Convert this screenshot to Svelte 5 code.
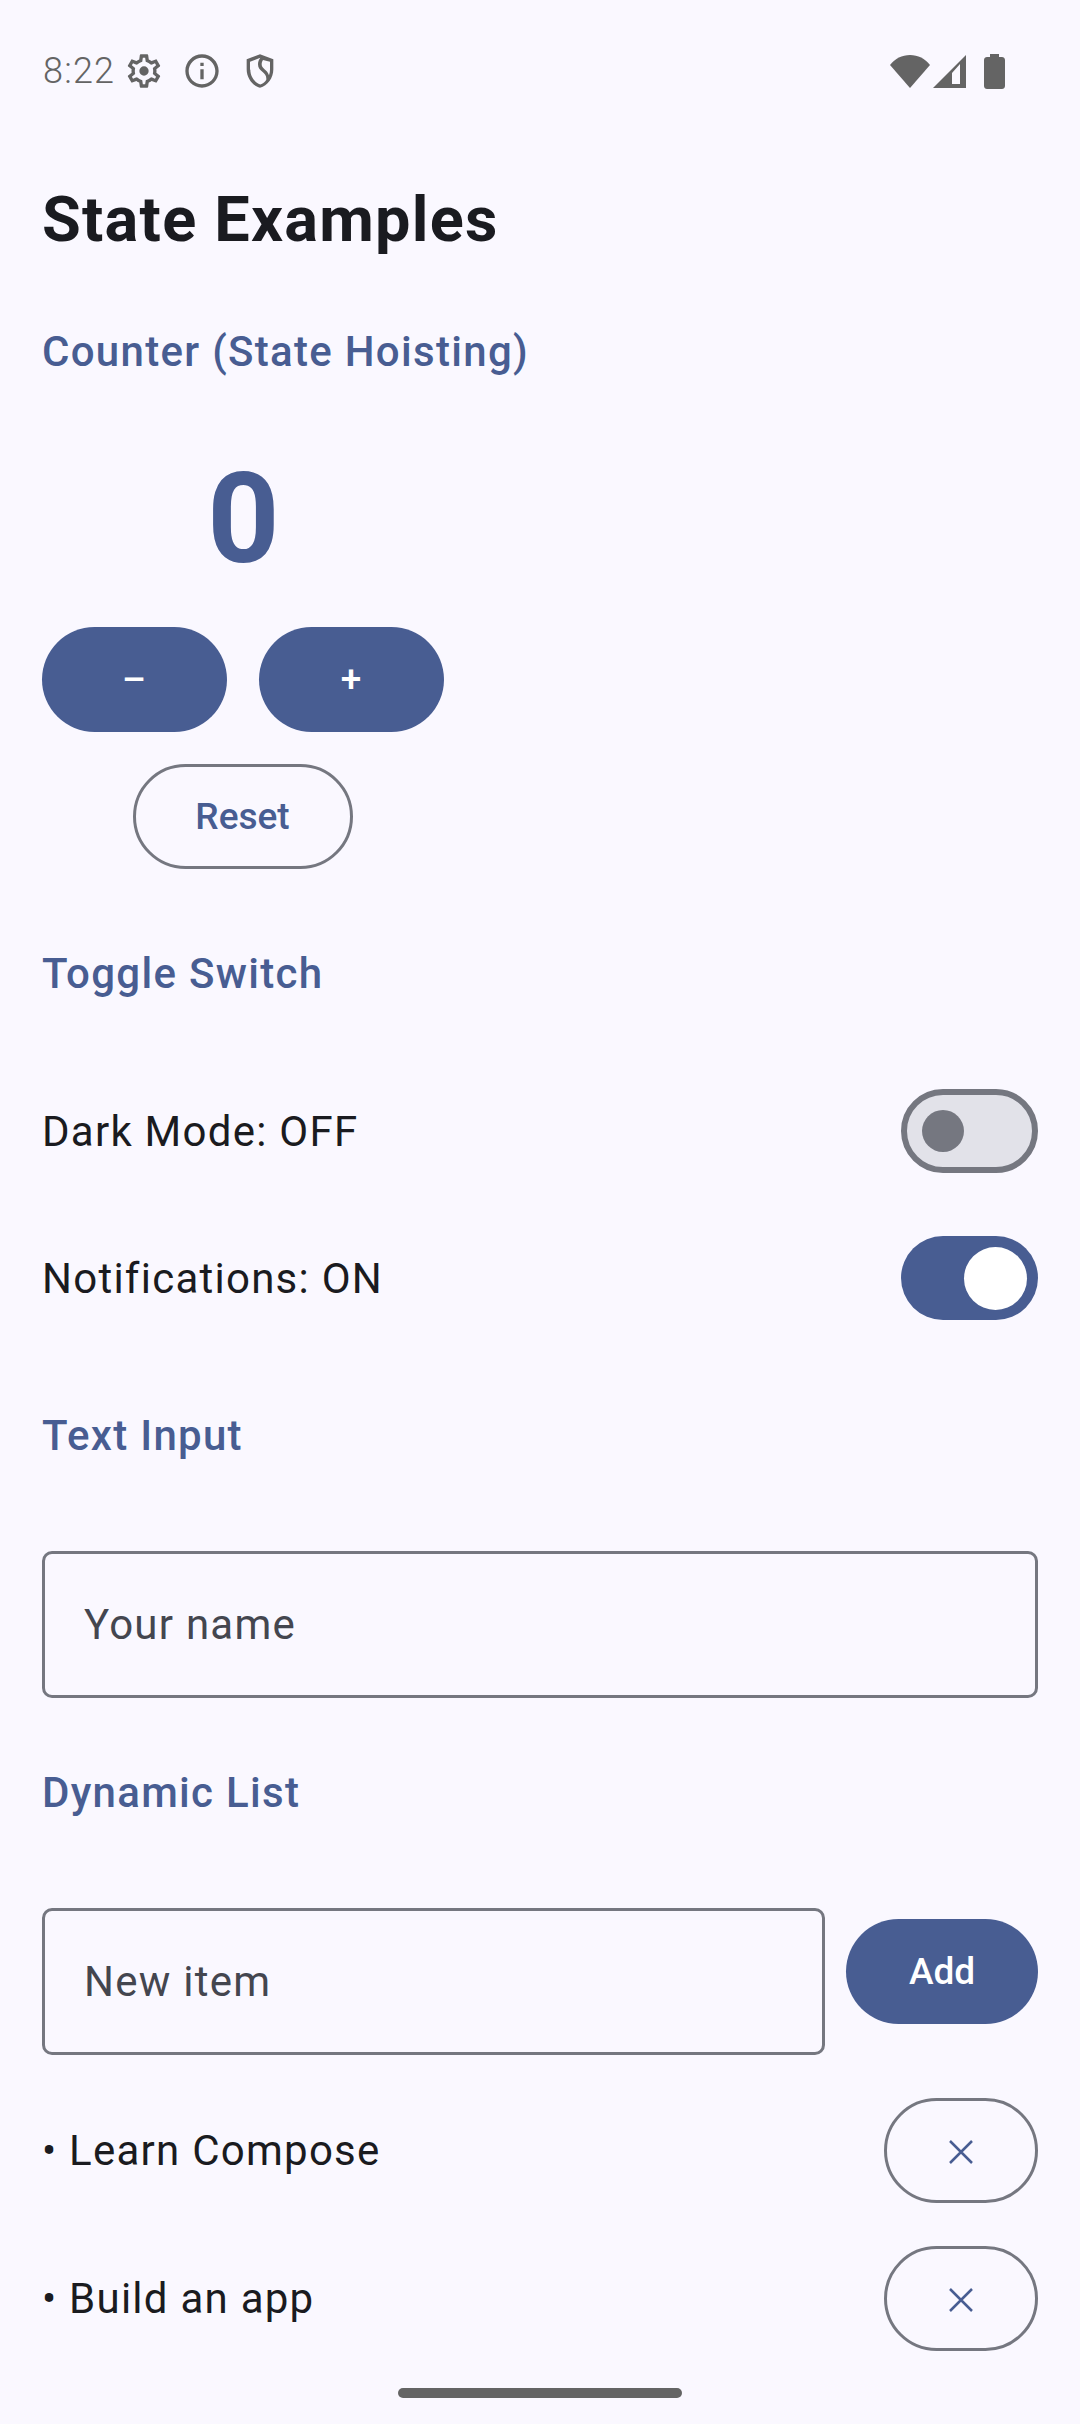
<script>
  let items = ["Learn Compose", "Build an app"];
</script>

<div class="page">
  <div class="status">
    <span class="time">8:22</span>
    <svg class="ic gear" viewBox="0 0 24 24"><path d="M19.43 12.98c.04-.32.07-.64.07-.98s-.03-.66-.07-.98l2.11-1.65c.19-.15.24-.42.12-.64l-2-3.46c-.12-.22-.39-.3-.61-.22l-2.49 1c-.52-.4-1.08-.73-1.69-.98l-.38-2.65C14.46 2.18 14.25 2 14 2h-4c-.25 0-.46.18-.49.42l-.38 2.65c-.61.25-1.17.59-1.69.98l-2.49-1c-.23-.09-.49 0-.61.22l-2 3.46c-.13.22-.07.49.12.64l2.11 1.65c-.04.32-.07.65-.07.98s.03.66.07.98l-2.11 1.65c-.19.15-.24.42-.12.64l2 3.46c.12.22.39.3.61.22l2.49-1c.52.4 1.08.73 1.69.98l.38 2.65c.03.24.24.42.49.42h4c.25 0 .46-.18.49-.42l.38-2.65c.61-.25 1.17-.59 1.69-.98l2.49 1c.23.09.49 0 .61-.22l2-3.46c.12-.22.07-.49-.12-.64l-2.11-1.65zm-1.98-1.71c.04.31.05.52.05.73s-.02.43-.05.73l-.14 1.13.89.7 1.08.84-.7 1.21-1.27-.51-1.04-.42-.9.68c-.43.32-.84.56-1.25.73l-1.06.43-.16 1.13-.2 1.35h-1.4l-.19-1.35-.16-1.13-1.06-.43c-.43-.18-.83-.41-1.23-.71l-.91-.7-1.06.43-1.27.51-.7-1.21 1.08-.84.89-.7-.14-1.13c-.03-.31-.05-.54-.05-.74s.02-.43.05-.73l.14-1.13-.89-.7-1.08-.84.7-1.21 1.27.51 1.04.42.9-.68c.43-.32.84-.56 1.25-.73l1.06-.43.16-1.13.2-1.35h1.39l.19 1.35.16 1.13 1.06.43c.43.18.83.41 1.23.71l.91.7 1.06-.43 1.27-.51.7 1.21-1.07.85-.89.7.14 1.13zM12 9.2a2.8 2.8 0 1 0 0 5.6 2.8 2.8 0 0 0 0-5.6z"/></svg>
    <svg class="ic info" viewBox="0 0 24 24"><path d="M11 7h2v2h-2zm0 4h2v6h-2zm1-9C6.48 2 2 6.48 2 12s4.48 10 10 10 10-4.48 10-10S17.52 2 12 2zm0 18c-4.41 0-8-3.59-8-8s3.59-8 8-8 8 3.59 8 8-3.59 8-8 8z"/></svg>
    <svg class="ic shield" viewBox="0 0 24 24"><path d="M12 2 4 5v6.100c0 5 3.400 9.700 8 10.900 4.600-1.200 8-5.900 8-10.900V5l-8-3zm6 9.100c0 1.200-.2 2.300-.6 3.400-.5-1.600-1.500-2.700-2.700-3.600-1-.8-1.700-1.600-1.700-2.900 0-1 .3-1.900.8-2.600L18 6.400v4.700zM6 11.100V6.400l6.200-2.300c-.9 1.100-1.400 2.400-1.400 3.900 0 2.100 1.200 3.400 2.600 4.500 1.400 1.100 2.400 2.200 2.400 4.100 0 .3 0 .5-.1.800-.8 1.200-2 2.200-3.500 2.700-3.600-1.200-6-4.900-6-8.800z"/></svg>
    <span class="spacer"></span>
    <svg class="wifi" viewBox="0 0 40 34"><path d="M0 11C5 4.500 12 1 20 1s15 3.500 20 10L20 34z"/></svg>
    <svg class="cell" viewBox="0 0 33 33"><path fill-rule="evenodd" d="M33 0v33H0zM27 9 19 18v11h8z"/></svg>
    <svg class="batt" viewBox="0 0 21 35"><path d="M6 0h9v3h3c1.500 0 3 1 3 3v26c0 2-1.500 3-3 3H3c-1.500 0-3-1-3-3V6c0-2 1.500-3 3-3h3z"/></svg>
  </div>

  <main>
    <h1>State Examples</h1>

    <h2 class="first">Counter (State Hoisting)</h2>
    <div class="counter">
      <div class="count">0</div>
      <div class="btns">
        <button class="filled">–</button>
        <button class="filled">+</button>
      </div>
      <button class="outlined reset">Reset</button>
    </div>

    <h2 class="toggle-head">Toggle Switch</h2>
    <div class="switches">
      <div class="row">
        <span class="body">Dark Mode: OFF</span>
        <span class="switch off"><i></i></span>
      </div>
      <div class="row">
        <span class="body">Notifications: ON</span>
        <span class="switch on"><i></i></span>
      </div>
    </div>

    <h2 class="input-head">Text Input</h2>
    <input class="field name" placeholder="Your name" />

    <h2 class="list-head">Dynamic List</h2>
    <div class="add-row">
      <input class="field" placeholder="New item" />
      <button class="filled add">Add</button>
    </div>
    <div class="items">
      {#each items as item}
        <div class="row">
          <span class="body">• {item}</span>
          <button class="outlined del" aria-label="Delete">
            <svg viewBox="0 0 24 24"><path d="M1 1 23 23M23 1 1 23" /></svg>
          </button>
        </div>
      {/each}
    </div>
  </main>

  <div class="pill"></div>
</div>

<style>
  :global(body) {
    margin: 0;
    background: #faf8ff;
  }
  .page {
    width: 1080px;
    height: 2424px;
    overflow: hidden;
    background: #faf8ff;
    font-family: Roboto, sans-serif;
    color: #1a1b20;
    display: flex;
    flex-direction: column;
    position: relative;
  }
  .status {
    height: 142px;
    padding: 0 75px 0 43px;
    box-sizing: border-box;
    display: flex;
    align-items: center;
    color: #646464;
    fill: #646464;
  }
  .time {
    font-size: 36px;
    font-weight: 300;
    letter-spacing: 1.2px;
  }
  .ic {
    width: 40px;
    height: 40px;
    fill: #646464;
  }
  .gear {
    margin-left: 9px;
  }
  .info {
    margin-left: 18px;
  }
  .shield {
    margin-left: 18px;
  }
  .spacer {
    flex: 1;
  }
  .wifi {
    width: 40px;
    height: 34px;
  }
  .cell {
    width: 33px;
    height: 33px;
    margin-left: 3px;
  }
  .batt {
    width: 21px;
    height: 35px;
    margin-left: 18px;
  }
  main {
    padding: 0 42px;
    display: flex;
    flex-direction: column;
  }
  h1 {
    margin: 36px 0 0;
    font-size: 63px;
    line-height: 84px;
    font-weight: 700;
    letter-spacing: 1.25px;
  }
  h2 {
    margin: 0;
    font-size: 42px;
    line-height: 63px;
    font-weight: 500;
    letter-spacing: 1.3px;
    color: #485d92;
  }
  .first {
    margin-top: 58px;
  }
  .toggle-head {
    margin-top: 73px;
  }
  .input-head {
    margin-top: 84px;
  }
  .list-head {
    margin-top: 63px;
  }
  .counter {
    width: 401px;
    display: flex;
    flex-direction: column;
    align-items: center;
  }
  .count {
    margin-top: 61px;
    padding-left: 2px;
    font-size: 126px;
    line-height: 150px;
    font-weight: 700;
    color: #485d92;
  }
  .btns {
    margin-top: 33px;
    display: flex;
    gap: 32px;
  }
  button {
    font-family: inherit;
    font-size: 37px;
    font-weight: 500;
    letter-spacing: 0;
    height: 105px;
    padding: 0 63px;
    border-radius: 53px;
    box-sizing: border-box;
  }
  .filled {
    background: #485d92;
    color: #fff;
    border: none;
  }
  .btns .filled {
    width: 185px;
    padding: 0;
  }
  .outlined {
    background: transparent;
    color: #485d92;
    border: 3px solid #757780;
  }
  .reset {
    margin-top: 32px;
    width: 220px;
    padding: 0;
  }
  .switches {
    margin-top: 84px;
    display: flex;
    flex-direction: column;
    gap: 63px;
  }
  .row {
    display: flex;
    align-items: center;
    justify-content: space-between;
  }
  .body {
    font-size: 42px;
    letter-spacing: 1.25px;
  }
  .switch {
    width: 137px;
    height: 84px;
    box-sizing: border-box;
    border-radius: 42px;
    display: flex;
    align-items: center;
  }
  .switch i {
    display: block;
    border-radius: 50%;
  }
  .off {
    background: #e2e2e9;
    border: 6px solid #757780;
    padding-left: 15px;
  }
  .off i {
    width: 42px;
    height: 42px;
    background: #757780;
  }
  .on {
    background: #485d92;
    justify-content: flex-end;
    padding-right: 11px;
  }
  .on i {
    width: 63px;
    height: 63px;
    background: #fff;
  }
  .field {
    display: block;
    box-sizing: border-box;
    width: 100%;
    min-width: 0;
    height: 147px;
    margin: 0;
    padding: 0 39px;
    background: transparent;
    border: 3px solid #757780;
    border-radius: 10px;
    font-family: inherit;
    font-size: 42px;
    letter-spacing: 1.25px;
    color: #1a1b20;
    outline: none;
  }
  .field::placeholder {
    color: #44464f;
    opacity: 1;
  }
  .name {
    margin-top: 84px;
  }
  .add-row {
    margin-top: 84px;
    display: flex;
    align-items: center;
    gap: 21px;
  }
  .add-row .field {
    flex: 1;
  }
  .add {
    flex: none;
    width: 192px;
    padding: 0;
    margin-top: -20px;
  }
  .items {
    margin-top: 43px;
    display: flex;
    flex-direction: column;
    gap: 43px;
  }
  .del {
    width: 154px;
    padding: 0;
    display: flex;
    align-items: center;
    justify-content: center;
  }
  .del svg {
    width: 24px;
    height: 24px;
    margin-top: 3px;
    fill: none;
    stroke: #485d92;
    stroke-width: 2.5;
  }
  .pill {
    position: absolute;
    left: 398px;
    bottom: 26px;
    width: 284px;
    height: 10px;
    border-radius: 5px;
    background: #646464;
  }
</style>
